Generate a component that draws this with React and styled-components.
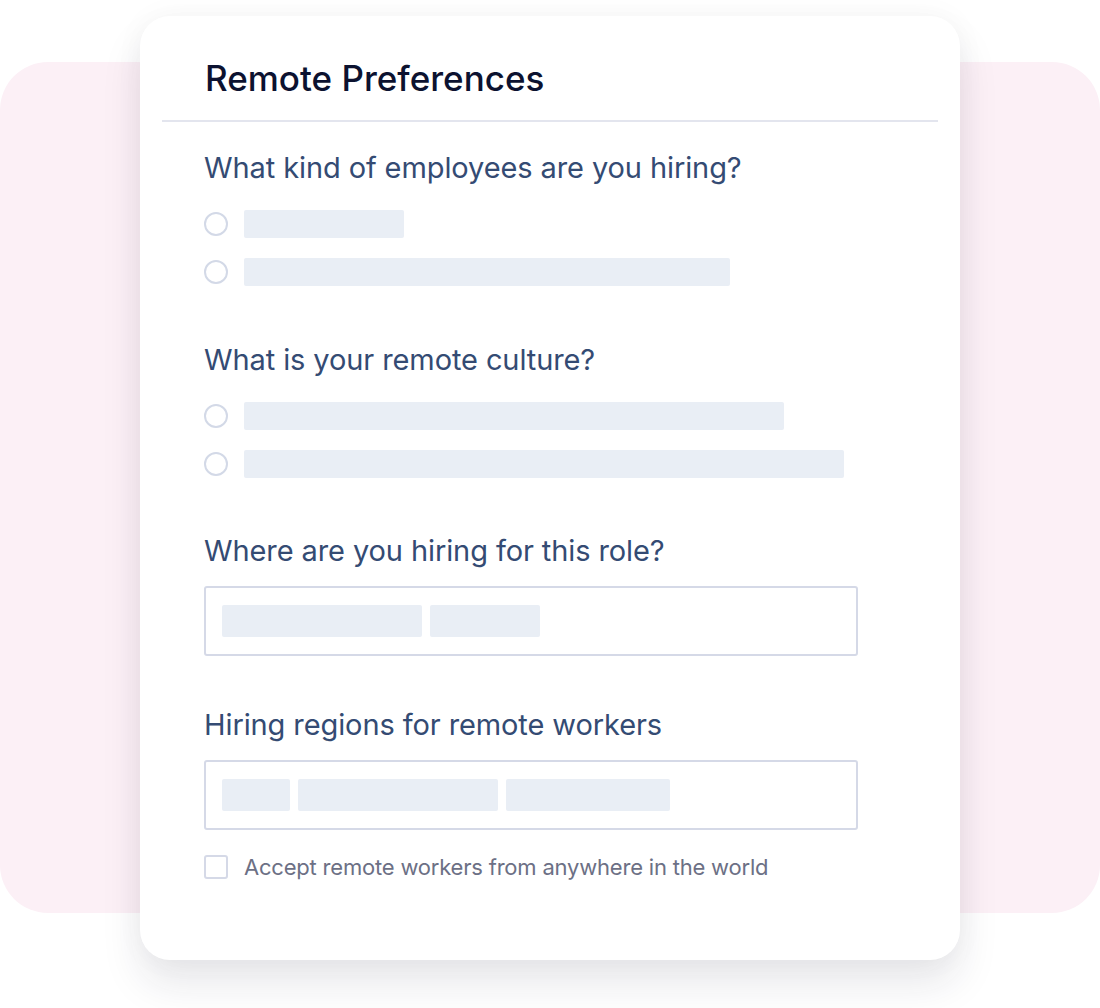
import styled, { createGlobalStyle } from "styled-components";

const GlobalStyle = createGlobalStyle`
  html, body {
    margin: 0;
    padding: 0;
    background: #ffffff;
  }
  body {
    font-family: Inter, "Noto Sans", "Liberation Sans", sans-serif;
    -webkit-font-smoothing: antialiased;
  }
`;

const questions = [
  { title: "What kind of employees are you hiring?", type: "radio", bars: [160, 486], gap: 28 },
  { title: "What is your remote culture?", type: "radio", bars: [540, 600], gap: 56 },
  { title: "Where are you hiring for this role?", type: "input", chips: [200, 110], gap: 55 },
  { title: "Hiring regions for remote workers", type: "input", chips: [68, 200, 164], gap: 51 },
];

const App = () => {
  return (
    <Stage>
      <GlobalStyle />
      <PinkBackdrop />
      <Card>
        <CardHeader>
          <Title>Remote Preferences</Title>
        </CardHeader>
        <CardBody>
          {questions.map((q, i) => (
            <Section key={i} $gap={q.gap}>
              <Question>{q.title}</Question>
              {q.type === "radio" ? (
                <Options>
                  {q.bars.map((w, j) => (
                    <OptionRow key={j}>
                      <Radio />
                      <Skeleton style={{ width: w }} />
                    </OptionRow>
                  ))}
                </Options>
              ) : (
                <InputBox>
                  {q.chips.map((w, j) => (
                    <Chip key={j} style={{ width: w }} />
                  ))}
                </InputBox>
              )}
            </Section>
          ))}
          <CheckRow>
            <Checkbox />
            <CheckLabel>Accept remote workers from anywhere in the world</CheckLabel>
          </CheckRow>
        </CardBody>
      </Card>
    </Stage>
  );
};

export default App;

const Stage = styled.div`
  width: 1100px;
  height: 1008px;
  display: grid;
  grid-template-columns: 1fr;
  grid-template-rows: 1fr;
  overflow: hidden;
`;

const PinkBackdrop = styled.div`
  grid-area: 1 / 1;
  margin-top: 62px;
  height: 851px;
  border-radius: 48px;
  background: #fcf0f6;
`;

const Card = styled.div`
  grid-area: 1 / 1;
  align-self: start;
  margin: 16px 0 0 140px;
  width: 820px;
  height: 944px;
  box-sizing: border-box;
  background: #ffffff;
  border-radius: 30px;
  box-shadow: 0 24px 40px rgba(30, 32, 60, 0.1), 0 0 30px rgba(30, 32, 60, 0.04);
  display: flex;
  flex-direction: column;
`;

const CardHeader = styled.div`
  margin: 0 22px;
  height: 106px;
  box-sizing: border-box;
  padding: 0 0 0 43px;
  display: flex;
  align-items: center;
  border-bottom: 2px solid #e3e5ee;
`;

const Title = styled.h1`
  margin: 20px 0 0;
  font-size: 35px;
  line-height: 40px;
  font-weight: 500;
  color: #0c1230;
`;

const CardBody = styled.div`
  padding: 0 0 0 64px;
  display: flex;
  flex-direction: column;
`;

const Section = styled.div`
  display: flex;
  flex-direction: column;
  margin-top: ${(p) => p.$gap}px;
`;

const Question = styled.h2`
  margin: 0;
  font-size: 29px;
  line-height: 36px;
  font-weight: 400;
  color: #344b73;
  letter-spacing: -0.1px;
`;

const Options = styled.div`
  margin-top: 24px;
  display: flex;
  flex-direction: column;
  gap: 20px;
`;

const OptionRow = styled.div`
  display: flex;
  align-items: center;
  gap: 16px;
`;

const Radio = styled.span`
  width: 24px;
  height: 24px;
  box-sizing: border-box;
  border: 2px solid #d3d9e7;
  border-radius: 50%;
  flex-shrink: 0;
`;

const Skeleton = styled.div`
  height: 28px;
  border-radius: 2px;
  background: #e9eef5;
`;

const InputBox = styled.div`
  margin-top: 17px;
  width: 654px;
  height: 70px;
  box-sizing: border-box;
  border: 2px solid #d5d9e7;
  border-radius: 3px;
  padding: 0 16px;
  display: flex;
  align-items: center;
  gap: 8px;
`;

const Chip = styled.div`
  height: 32px;
  border-radius: 2px;
  background: #e9eef5;
`;

const CheckRow = styled.label`
  margin-top: 23px;
  display: flex;
  align-items: center;
  gap: 16px;
`;

const Checkbox = styled.span`
  width: 24px;
  height: 24px;
  box-sizing: border-box;
  border: 2px solid #d5d9e7;
  border-radius: 3px;
  flex-shrink: 0;
`;

const CheckLabel = styled.span`
  font-size: 22px;
  line-height: 28px;
  color: #6c7085;
  letter-spacing: -0.2px;
`;
